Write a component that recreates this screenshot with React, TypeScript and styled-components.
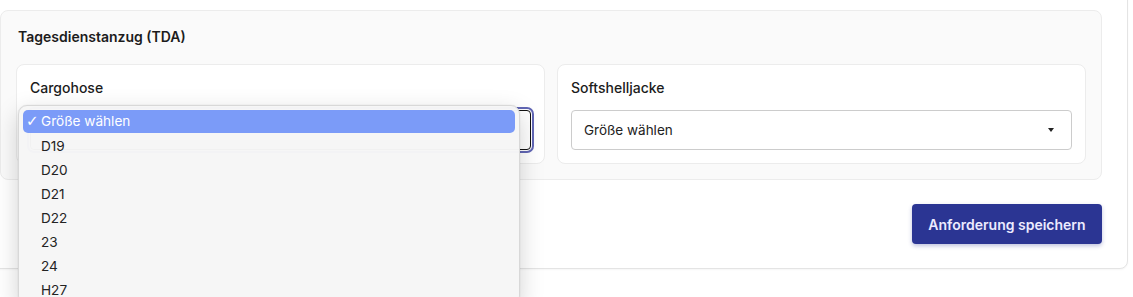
import React from "react";
import styled, { createGlobalStyle } from "styled-components";

const Global = createGlobalStyle`
  html, body { margin: 0; padding: 0; background: #ffffff; overflow: hidden; }
  body { font-family: Inter, "Noto Sans", "Liberation Sans", sans-serif; color: #1f1f1f; }
  * { box-sizing: border-box; }
`;

const Page = styled.div`
  width: 1133px;
  height: 297px;
  overflow: hidden;
  position: relative;
`;

const OuterCard = styled.div`
  margin: -15px 0 0 -25px;
  width: 1153px;
  padding: 24px 25px 24px 24px;
  background: #ffffff;
  border: 1px solid #e4e4e4;
  border-radius: 8px;
  box-shadow: 0 1px 2px rgba(0, 0, 0, 0.04);
  display: flex;
  flex-direction: column;
`;

const Panel = styled.section`
  background: #fafafa;
  border: 1px solid #ececec;
  border-radius: 8px;
  padding: 16px 15px 15px 15px;
`;

const PanelTitle = styled.h3`
  margin: 0 0 17px 2px;
  font-size: 14px;
  line-height: 20px;
  font-weight: 600;
  color: #1c1c1c;
`;

const Grid = styled.div`
  display: grid;
  grid-template-columns: 1fr 1fr;
  gap: 12px;
`;

const ItemCard = styled.div`
  position: relative;
  background: #ffffff;
  border: 1px solid #ececec;
  border-radius: 8px;
  padding: 13px;
`;

const Label = styled.div`
  font-size: 14px;
  line-height: 20px;
  font-weight: 500;
  color: #1c1c1c;
  margin-bottom: 12px;
`;

const SelectBox = styled.div<{ $focused?: boolean }>`
  position: relative;
  height: 40px;
  border: 1px solid ${(p) => (p.$focused ? "#111111" : "#cccccc")};
  border-radius: 4px;
  background: #ffffff;
  display: flex;
  align-items: center;
  justify-content: space-between;
  padding: 0 17px 0 12px;
  font-size: 13.5px;
  color: #222;
  box-shadow: ${(p) => (p.$focused ? "0 0 0 1px #ffffff, 0 0 0 3px #6166b5" : "none")};
`;

const SelectValue = styled.span<{ $hidden?: boolean }>`
  visibility: ${(p) => (p.$hidden ? "hidden" : "visible")};
`;

const Caret = styled.span`
  width: 0;
  height: 0;
  border-left: 3.5px solid transparent;
  border-right: 3.5px solid transparent;
  border-top: 4px solid #222;
`;

const Dropdown = styled.div`
  position: absolute;
  left: -13px;
  top: -6px;
  width: 502px;
  height: 200px;
  background: rgba(246, 246, 246, 0.98);
  border: 1px solid #d8d8d8;
  border-radius: 9px;
  box-shadow: 0 8px 24px rgba(0, 0, 0, 0.18), 0 0 1px rgba(0, 0, 0, 0.2);
  padding: 4px 4px;
  z-index: 10;
  overflow: hidden;
`;

const Option = styled.div<{ $active?: boolean }>`
  height: ${(p) => (p.$active ? "23px" : "24px")};
  line-height: ${(p) => (p.$active ? "23px" : "24px")};
  border-radius: 5px;
  font-size: 13.6px;
  padding-left: 18px;
  position: relative;
  color: ${(p) => (p.$active ? "#ffffff" : "#232323")};
  background: ${(p) => (p.$active ? "#7b9bf8" : "transparent")};
  margin-bottom: ${(p) => (p.$active ? "1px" : "0")};
`;

const Check = styled.span`
  position: absolute;
  left: 3px;
  top: 0;
  font-size: 15px;
  font-family: "DejaVu Sans", sans-serif;
`;

const Footer = styled.div`
  display: flex;
  justify-content: flex-end;
  margin-top: 24px;
`;

const SaveButton = styled.button`
  height: 40px;
  width: 190px;
  border: none;
  border-radius: 4px;
  background: #2b3593;
  color: #ecebff;
  font-family: Inter, "Noto Sans", "Liberation Sans", sans-serif;
  font-size: 14px;
  font-weight: 600;
  box-shadow: 0 2px 4px rgba(43, 53, 147, 0.3);
  cursor: pointer;
`;

const options = ["D19", "D20", "D21", "D22", "23", "24", "H27"];

export default function App() {
  return (
    <Page>
      <Global />
      <OuterCard>
        <Panel>
          <PanelTitle>Tagesdienstanzug (TDA)</PanelTitle>
          <Grid>
            <ItemCard>
              <Label>Cargohose</Label>
              <SelectBox $focused>
                <SelectValue $hidden>Größe wählen</SelectValue>
                <Caret />
                <Dropdown>
                  <Option $active>
                    <Check>✓</Check>
                    Größe wählen
                  </Option>
                  {options.map((o) => (
                    <Option key={o}>{o}</Option>
                  ))}
                </Dropdown>
              </SelectBox>
            </ItemCard>
            <ItemCard>
              <Label>Softshelljacke</Label>
              <SelectBox>
                <SelectValue>Größe wählen</SelectValue>
                <Caret />
              </SelectBox>
            </ItemCard>
          </Grid>
        </Panel>
        <Footer>
          <SaveButton>Anforderung speichern</SaveButton>
        </Footer>
      </OuterCard>
    </Page>
  );
}
